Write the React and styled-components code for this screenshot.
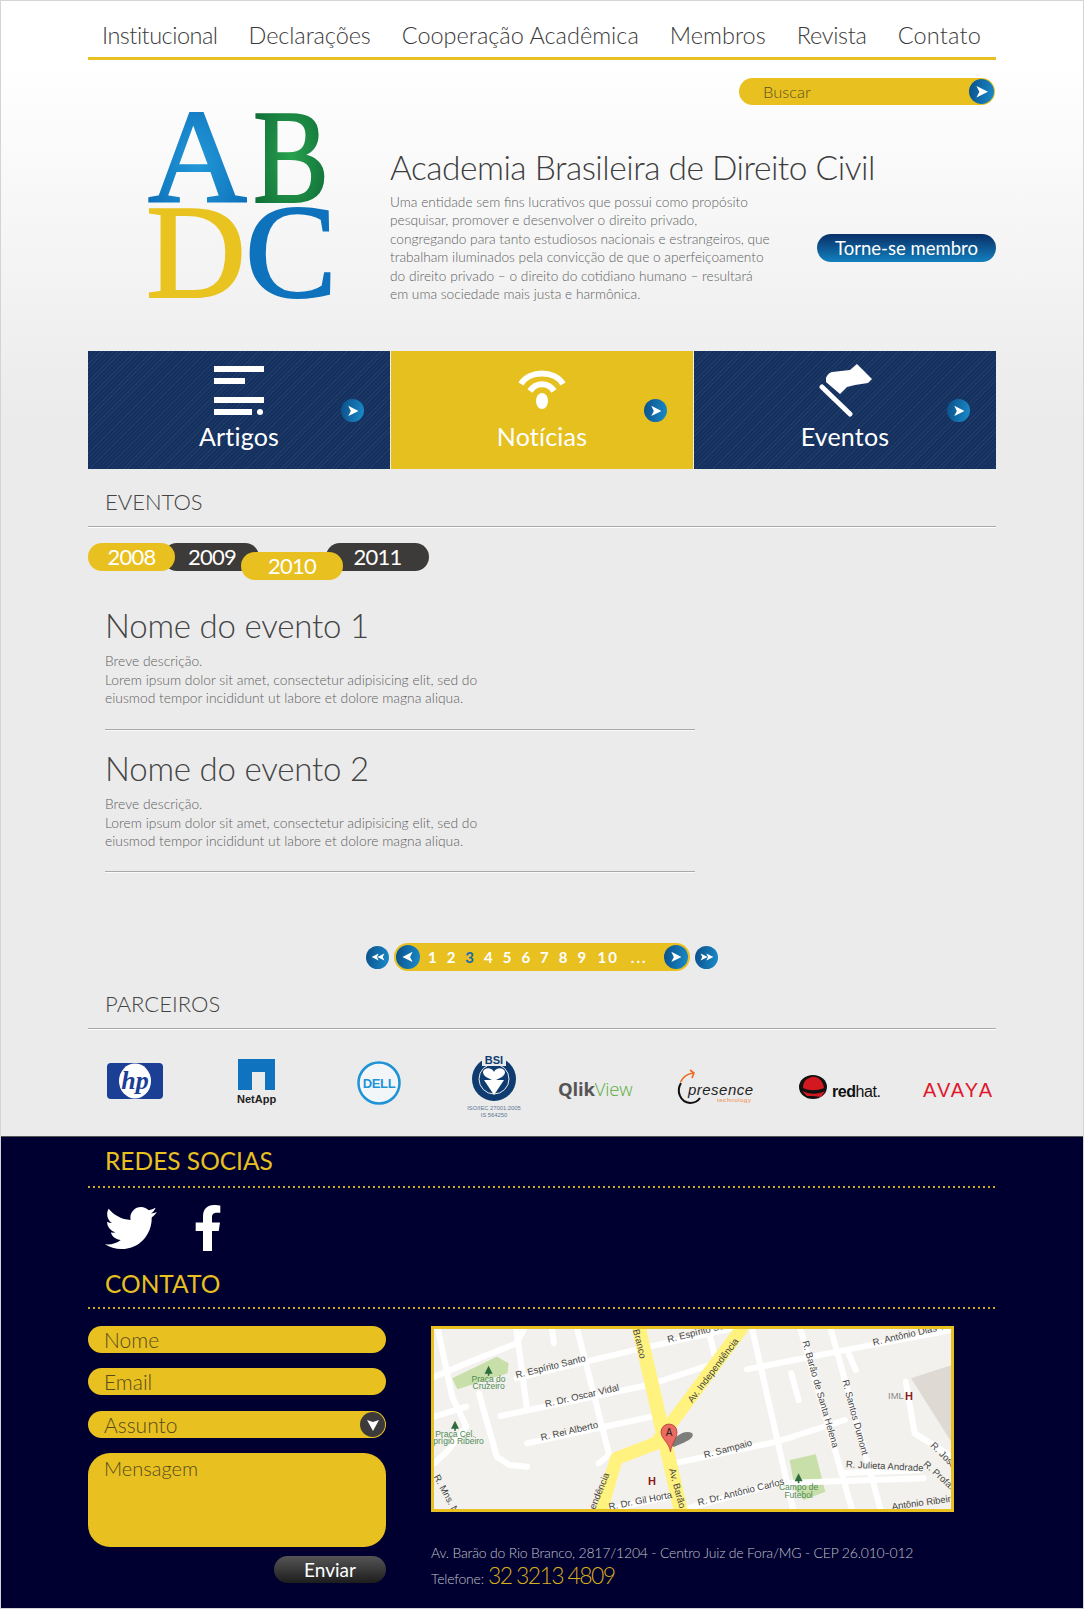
import React from 'react';
import styled, { createGlobalStyle } from 'styled-components';
import { FaTwitter, FaFacebookF } from 'react-icons/fa';

const GOLD = '#e8c020';
const FONT = 'Lato, "Open Sans", sans-serif';

const Global = createGlobalStyle`
  html, body { margin: 0; padding: 0; background: #ebebeb; }
  body { font-family: ${FONT}; font-weight: 300; }
  * { box-sizing: border-box; }
`;

const Page = styled.div`
  width: 1084px;
  height: 1609px;
  display: flex;
  flex-direction: column;
  border: 1px solid #d4d4d4;
  background: linear-gradient(#fff 0, #fff 60px, #ebebeb 420px, #ebebeb 100%);
  overflow: hidden;
`;
const Main = styled.main`
  flex: 0 0 1135px;
  padding: 0 87px;
`;
const Nav = styled.nav`
  height: 59px;
  border-bottom: 3px solid ${GOLD};
  display: flex;
  justify-content: space-between;
  align-items: center;
  padding: 12px 15px 0 14px;
`;
const NavLink = styled.a`
  font-size: 23.5px;
  color: #3b3b3b;
  letter-spacing: ${p => p.$ls || 0}px;
`;
const SearchRow = styled.div`
  display: flex;
  justify-content: flex-end;
  padding: 18px 1px 0 0;
`;
const Pill = styled.div`
  width: 256px;
  height: 27px;
  border-radius: 14px;
  background: ${GOLD};
  display: flex;
  align-items: center;
  justify-content: space-between;
  font-size: 16.5px;
  color: #5c5020;
  padding: 0 1px 0 24px;
`;
const Round = styled.span`
  flex: none;
  width: ${p => p.$s || 23}px;
  height: ${p => p.$s || 23}px;
  border-radius: 50%;
  background: ${p => p.$dark ? '#3c3a3a' : 'linear-gradient(100deg, #0a4f88, #1a8ccb)'};
  display: inline-flex;
  align-items: center;
  justify-content: center;
`;
const Hero = styled.section`
  display: grid;
  grid-template-columns: 302px 395px 1fr;
  height: 246px;
`;
const LogoSvg = styled.svg`
  display: block;
  margin-left: 58px;
  overflow: visible;
`;
const HeroText = styled.div`
  padding-top: 40px;
`;
const Title = styled.h1`
  margin: 0;
  font-size: 33.5px;
  line-height: 44px;
  font-weight: 300;
  color: #3d3d3d;
  white-space: nowrap;
  letter-spacing: -0.5px;
`;
const Para = styled.p`
  margin: 4px 0 0;
  font-size: 13.7px;
  line-height: 18.4px;
  color: #5e5e5e;
  white-space: nowrap;
`;
const Cta = styled.a`
  margin-top: 129px;
  justify-self: end;
  width: 179px;
  height: 28px;
  border-radius: 14px;
  background: linear-gradient(#0a2f66, #1280bf);
  color: #fff;
  font-size: 18.5px;
  font-weight: 400;
  display: flex;
  align-items: center;
  justify-content: center;
`;
const Tiles = styled.div`
  display: grid;
  grid-template-columns: 302px 302px 302px;
  column-gap: 1px;
  height: 118px;
`;
const Tile = styled.a`
  position: relative;
  display: flex;
  flex-direction: column;
  align-items: center;
  padding-top: 12px;
  color: #fff;
  font-size: 25px;
  letter-spacing: 0.2px;
  font-weight: 400;
  background-color: ${p => p.$active ? '#e6c01f' : '#14305f'};
  background-image: ${p => p.$active ? 'none' : 'repeating-linear-gradient(135deg, rgba(255,255,255,.05) 0 1px, transparent 1px 3px)'};
`;
const TileIcon = styled.svg`
  display: block;
  height: 54px;
  width: 70px;
  margin-bottom: 4px;
`;
const TileArrow = styled.span`
  position: absolute;
  right: 26px;
  top: 48px;
  display: flex;
`;
const SectionHead = styled.h2`
  margin: 0;
  height: 58px;
  padding: 0 0 0 17px;
  font-size: 22px;
  font-weight: 300;
  line-height: 66px;
  color: #444;
  border-bottom: 1px solid #a8a8a8;
  box-shadow: 0 1px 0 #fff;
`;
const Years = styled.div`
  display: flex;
  align-items: flex-start;
  height: 38px;
  margin-top: 16px;
`;
const Year = styled.span`
  position: relative;
  z-index: ${p => p.$z};
  width: ${p => p.$w}px;
  height: 28px;
  margin-left: ${p => p.$ml || 0}px;
  margin-top: ${p => p.$mt || 0}px;
  border-radius: 14px;
  background: ${p => p.$on ? GOLD : '#3d3a3a'};
  color: #fff;
  font-size: 22px;
  font-weight: 400;
  letter-spacing: -0.8px;
  line-height: 28px;
  text-align: center;
  padding-left: ${p => p.$pl || 0}px;
`;
const EventItem = styled.article`
  width: 590px;
  margin-left: 17px;
  height: ${p => p.$h}px;
  border-bottom: 1px solid #a8a8a8;
  color: #5e5e5e;
  box-shadow: 0 1px 0 #fafafa;
`;
const EventTitle = styled.h3`
  margin: 0;
  padding-top: ${p => p.$pt}px;
  font-size: 33px;
  letter-spacing: -0.2px;
  line-height: 42px;
  font-weight: 300;
  color: #444;
`;
const EventText = styled.p`
  margin: 6px 0 0;
  font-size: 13.85px;
  line-height: 18.5px;
  white-space: nowrap;
`;
const Pager = styled.div`
  display: flex;
  justify-content: center;
  align-items: center;
  gap: 5px;
  margin-top: 71px;
  height: 28px;
`;
const PagerBar = styled.div`
  width: 296px;
  height: 28px;
  border-radius: 14px;
  background: ${GOLD};
  display: flex;
  align-items: center;
  padding: 0 2px;
`;
const PagerNums = styled.div`
  flex: 1;
  display: flex;
  align-items: center;
  padding-left: 3px;
`;
const Num = styled.span`
  width: ${p => p.$w || 18.7}px;
  margin-left: ${p => p.$ml || 0}px;
  text-align: center;
  font-size: 15px;
  font-weight: 700;
  color: ${p => p.$on ? '#146bb0' : '#fff'};
  letter-spacing: ${p => p.$ls || 0}px;
`;
const Logos = styled.div`
  height: 106px;
  display: flex;
  padding: 22px 0 0 19px;
  align-items: flex-start;
`;
const LogoBox = styled.svg`
  display: block;
  flex: none;
  overflow: visible;
`;
const Footer = styled.footer`
  flex: 1;
  background: #000030;
  border-top: 1px solid #555;
  padding: 0 87px;
`;
const FootHead = styled.h2`
  margin: 0;
  padding-left: 17px;
  height: ${p => p.$h};
  line-height: ${p => p.$lh};
  font-size: 24.5px;
  font-weight: 400;
  color: ${GOLD};
  background: repeating-linear-gradient(90deg, #c9a82a 0 2px, transparent 2px 5px) bottom / 100% 2px no-repeat;
`;
const Social = styled.div`
  display: flex;
  align-items: center;
  height: 88px;
  padding: 0 0 8px 17px;
  color: #fff;
  gap: 28px;
`;
const FootGrid = styled.div`
  display: grid;
  grid-template-columns: 298px 1fr;
  column-gap: 45px;
  padding-top: 17px;
`;
const Form = styled.form`
  display: flex;
  flex-direction: column;
  gap: 15px;
`;
const Field = styled.input`
  display: block;
  width: 100%;
  height: 27px;
  border: 0;
  outline: 0;
  border-radius: 14px;
  background: ${GOLD};
  font: 300 21px ${FONT};
  padding: 0 16px;
  &::placeholder { color: #574b1d; opacity: 1; }
`;
const SelectWrap = styled.div`
  position: relative;
  margin-top: 1px;
`;
const SelectBtn = styled.span`
  position: absolute;
  right: 1px;
  top: 1px;
  display: flex;
`;
const Area = styled.textarea`
  display: block;
  width: 100%;
  height: 94px;
  border: 0;
  outline: 0;
  resize: none;
  border-radius: 22px;
  background: ${GOLD};
  font: 300 20px ${FONT};
  padding: 3px 16px;
  &::placeholder { color: #574b1d; opacity: 1; }
`;
const SendRow = styled.div`
  display: flex;
  justify-content: flex-end;
  margin-top: -6px;
`;
const Send = styled.button`
  width: 112px;
  height: 27px;
  border: 0;
  border-radius: 14px;
  background: linear-gradient(#555, #1d1d1d);
  color: #fff;
  font: 400 19px ${FONT};
  padding: 0;
`;
const MapFrame = styled.div`
  width: 523px;
  height: 186px;
  border: 3px solid ${GOLD};
  background: #f2f0ec;
  overflow: hidden;
`;
const MapSvg = styled.svg`
  display: block;
`;
const Address = styled.p`
  margin: 29px 0 0;
  font-size: 14px;
  letter-spacing: -0.2px;
  line-height: 23px;
  color: #c0c0c8;
  white-space: nowrap;
`;
const Phone = styled.span`
  font-size: 23px;
  letter-spacing: -1.6px;
  color: #d7ae1e;
  margin-left: 4px;
`;

const Arrow = ({ dir = 1, dbl, s = 8 }) => (
  <svg width={dbl ? s * 2 : s * 1.7} height={s * 1.7} viewBox={dbl ? '-11 -7 22 14' : '-7 -7 14 14'} aria-hidden>
    <g fill="#fff" transform={`scale(${dir},1)`}>
      {dbl ? (
        <>
          <path d="M-10 -5.5 L1 0 L-10 5.5 L-7.5 0Z" />
          <path d="M-1 -5.5 L10 0 L-1 5.5 L1.5 0Z" />
        </>
      ) : <path d="M-5.5 -6 L6.5 0 L-5.5 6 L-2.5 0Z" />}
    </g>
  </svg>
);

const AbdcLogo = () => (
  <LogoSvg width="190" height="200" viewBox="148 105 190 200" aria-label="ABDC">
    <defs>
      <radialGradient id="ga" cx="50%" cy="55%" r="60%"><stop offset="0" stopColor="#2299d8" /><stop offset="1" stopColor="#0c6db8" /></radialGradient>
      <radialGradient id="gb" cx="50%" cy="50%" r="60%"><stop offset="0" stopColor="#28a24e" /><stop offset="1" stopColor="#0e6a36" /></radialGradient>
    </defs>
    <g fontFamily='"Liberation Serif", serif' fontSize="134" strokeWidth="2">
      <text x="150" y="201" fill="url(#ga)" stroke="url(#ga)" textLength="99" lengthAdjust="spacingAndGlyphs">A</text>
      <text x="255" y="202" fill="url(#gb)" stroke="url(#gb)" textLength="76" lengthAdjust="spacingAndGlyphs">B</text>
      <text x="148" y="297" fill="#e9c420" stroke="#e9c420" textLength="100" lengthAdjust="spacingAndGlyphs">D</text>
      <text x="247" y="297" fill="#0e72bd" stroke="#0e72bd" textLength="92" lengthAdjust="spacingAndGlyphs">C</text>
    </g>
  </LogoSvg>
);

const ListIcon = () => (
  <TileIcon viewBox="0 0 70 54" fill="#fff" aria-hidden>
    <rect x="10" y="3" width="50" height="6" />
    <rect x="10" y="15" width="31" height="6" />
    <rect x="10" y="34" width="50" height="6" />
    <rect x="10" y="46" width="38" height="6" />
    <circle cx="56" cy="49" r="3" />
  </TileIcon>
);
const WifiIcon = () => (
  <TileIcon viewBox="0 0 70 54" aria-hidden>
    <g fill="none" stroke="#fff" strokeWidth="6">
      <path d="M14 21 C22 7 48 7 56 21" />
      <path d="M23 28 C29 19 41 19 47 28" />
    </g>
    <ellipse cx="35" cy="38" rx="6" ry="8" fill="#fff" />
  </TileIcon>
);
const FlagIcon = () => (
  <TileIcon viewBox="0 0 70 54" aria-hidden>
    <path d="M16 15 Q18 10 22 9 L40 7 L47 1 L62 16 L58 20 L45 22 L37 24 L30 31 L16 19Z" fill="#fff" strokeLinejoin="round" />
    <path d="M12 24 L40 51" stroke="#fff" strokeWidth="5" strokeLinecap="round" />
  </TileIcon>
);

const EVENT_LINES = ['Breve descrição.', 'Lorem ipsum dolor sit amet, consectetur adipisicing elit, sed do', 'eiusmod tempor incididunt ut labore et dolore magna aliqua.'];

const SANS = '"Liberation Sans", sans-serif';

const PARTNERS = [
  { w: 131, h: 70, node: (
    <g>
      <rect x="0" y="12" width="56" height="36" rx="4" fill="#1c3f96" />
      <ellipse cx="28" cy="30" rx="16" ry="17.5" fill="#fff" />
      <text x="28" y="38" textAnchor="middle" fontFamily='"Liberation Serif", serif' fontStyle="italic" fontWeight="700" fontSize="26" fill="#1c3f96">hp</text>
    </g>) },
  { w: 118, h: 70, node: (
    <g>
      <path d="M0 8 H37 V39 H27 V21 H14 V39 H0Z" fill="#0f73c0" />
      <text x="-1" y="52" fontFamily={SANS} fontWeight="700" fontSize="11" fill="#222">NetApp</text>
    </g>) },
  { w: 117, h: 70, node: (
    <g>
      <circle cx="23" cy="32" r="20.5" fill="#f3f6f9" stroke="#1e94d6" strokeWidth="2.5" />
      <text x="23" y="37" textAnchor="middle" fontFamily={SANS} fontWeight="700" fontSize="13" letterSpacing="-.4" fill="#1e94d6">DELL</text>
    </g>) },
  { w: 85, h: 80, node: (
    <g>
      <circle cx="21" cy="28" r="22" fill="#0f3c70" />
      <circle cx="21" cy="28" r="15" fill="none" stroke="#ebebeb" strokeWidth="1" />
      <path d="M21 21 C19 16 11 16 10 21 C10 24 12 26 21 30 C30 26 32 24 32 21 C31 16 23 16 21 21Z" fill="#fff" />
      <path d="M11 29 L31 29 L21 44Z" fill="#fff" />
      <rect x="9" y="3" width="24" height="12" fill="#ebebeb" />
      <text x="21" y="13" textAnchor="middle" fontFamily={SANS} fontWeight="700" fontSize="11" fill="#0f3c70">BSI</text>
      <text x="21" y="59" textAnchor="middle" fontFamily={SANS} fontSize="5.8" fill="#5b7795">ISO/IEC 27001:2005</text>
      <text x="21" y="66" textAnchor="middle" fontFamily={SANS} fontSize="5.8" fill="#5b7795">IS 564250</text>
    </g>) },
  { w: 119, h: 70, node: (
    <text x="0" y="45" fontFamily='"Open Sans", sans-serif' fontSize="18.5" letterSpacing="-.2">
      <tspan fontWeight="700" fill="#555">Qlik</tspan><tspan fill="#5cab3c">View</tspan>
    </text>) },
  { w: 122, h: 70, node: (
    <g>
      <path d="M4 32 C-1 40 3 51 13 52 C18 52 21 50 23 47" fill="none" stroke="#111" strokeWidth="2" />
      <path d="M3.5 31 C6 26 10 23 16 22 M13 19 L17 22 L15 27" fill="none" stroke="#ee6a1e" strokeWidth="1.6" />
      <text x="11" y="44" fontFamily={SANS} fontStyle="italic" fontSize="15" textLength="65" fill="#222">presence</text>
      <text x="40" y="51" fontFamily={SANS} fontSize="6" textLength="34" fill="#ee8a3c">technology</text>
    </g>) },
  { w: 124, h: 70, node: (
    <g>
      <ellipse cx="14" cy="36" rx="14" ry="12" fill="#111" />
      <path d="M4 37 C4 30 8 27 13 26 C19 25 24 30 25 37 C18 40 10 40 4 37Z" fill="#d2191f" />
      <path d="M3 40 C10 43 18 44 26 40 L22 46 L14 45 L8 45Z" fill="#d2191f" />
      <text x="33" y="46" fontFamily={SANS} fontSize="16" textLength="49" fill="#111"><tspan fontWeight="700">red</tspan>hat.</text>
    </g>) },
  { w: 70, h: 70, node: (
    <text x="0" y="46" fontFamily={SANS} fontSize="20" textLength="69" fill="#e0182d">AVAYA</text>) },
];

const mp = (x, y) => [x / 2.8 - 14, y / 3 - 19];
const line = pts => pts.map(([x, y]) => mp(x, y).join(',')).join(' ');

const WHITE_ROADS = [
  [[30, 205], [130, 160], [270, 100], [290, 60]],
  [[270, 205], [620, 115], [900, 50]],
  [[225, 318], [640, 225], [840, 155]],
  [[300, 400], [670, 315]],
  [[720, 458], [1000, 395], [1190, 330]],
  [[750, 595], [1000, 520], [1410, 505]],
  [[915, 178], [1240, 110], [1490, 60]],
  [[1065, 57], [1210, 600]],
  [[1150, 57], [1290, 600]],
  [[930, 57], [1045, 600]],
  [[440, 57], [530, 435], [500, 460]],
  [[50, 57], [90, 260], [130, 350], [80, 420], [40, 460]],
  [[40, 320], [130, 290]],
  [[165, 250], [215, 440], [250, 465], [300, 470]],
  [[1360, 215], [1385, 370], [1490, 440]],
  [[1040, 190], [1060, 270]],
  [[1180, 490], [1400, 480]],
  [[270, 60], [300, 300]],
  [[370, 60], [375, 100]],
  [[810, 70], [830, 160]],
  [[520, 600], [700, 560]],
  [[1200, 130], [1220, 180]],
];

const LABELS = [
  ['R. Espírito Santo', 270, 205, -14],
  ['R. Espírito San', 695, 98, -14],
  ['R. Dr. Oscar Vidal', 352, 292, -13],
  ['R. Rei Alberto', 340, 392, -13],
  ['Av. Independência', 762, 280, -53],
  ['Branco', 596, 60, 76],
  ['R. Sampaio', 797, 445, -15],
  ['R. Antônio Dias Tosta', 1270, 107, -13],
  ['R. Barão de Santa Helena', 1070, 95, 74],
  ['R. Santos Dumont', 1182, 212, 75],
  ['R. Julieta Andrade', 1192, 472, 3],
  ['R. Dr. Antônio Carlos', 780, 587, -14],
  ['R. Dr. Gil Horta', 530, 600, -11],
  ['Av. Barão', 697, 478, 75],
  ['endência', 490, 600, -68],
  ['Antônio Ribeiro', 1322, 600, -8],
  ['R. José', 1428, 408, 45],
  ['R. Profa.', 1408, 465, 42],
  ['R. Mns. Ne', 38, 500, 62],
];

const GREEN_LABELS = [
  ['Praça do', 192, 215], ['Cruzeiro', 192, 238], ['Praça Cel.', 98, 380], ['Aprígio Ribeiro', 100, 403],
  ['Campo de', 1060, 540], ['Futebol', 1060, 563],
];

const MapDrawing = () => (
  <MapSvg width="517" height="180" viewBox="0 0 517 180" role="img" aria-label="Mapa">
    <rect width="517" height="180" fill="#f3f1ed" />
    <polygon points={line([[1375, 205], [1490, 165], [1490, 400]])} fill="#dedad3" />
    <polygon points={line([[90, 205], [215, 140], [248, 160], [245, 190], [105, 238]])} fill="#c9dfa9" />
    <polygon points={line([[1035, 450], [1108, 433], [1135, 545], [1075, 570], [1050, 540]])} fill="#c9dfa9" />
    <g fill="none" stroke="#fff" strokeWidth="6" strokeLinejoin="round" strokeLinecap="round">
      {WHITE_ROADS.map((r, i) => <polyline key={i} points={line(r)} />)}
    </g>
    <g fill="none" stroke="#fff27f" strokeLinejoin="round">
      <polyline strokeWidth="14" points={line([[612, 50], [732, 610]])} />
      <polyline strokeWidth="13" points={line([[905, 50], [700, 345], [660, 400], [550, 445], [505, 610]])} />
    </g>
    <g fontFamily={SANS} fontSize="9.5">
      {LABELS.map(([t, x, y, r]) => {
        const [px, py] = mp(x, y);
        return <text key={t} x={px} y={py} fill="#444" transform={`rotate(${r} ${px} ${py})`}>{t}</text>;
      })}
      {GREEN_LABELS.map(([t, x, y]) => {
        const [px, py] = mp(x, y);
        return <text key={t} x={px} y={py} fill="#4f8b57" fontSize="8.5" textAnchor="middle">{t}</text>;
      })}
      <text x="454" y="70" fill="#8a8a8a">IML</text>
      <text x="471" y="71" fill="#8c1a1a" fontWeight="700" fontSize="11">H</text>
      <text x="214" y="156" fill="#8c1a1a" fontWeight="700" fontSize="11">H</text>
    </g>
    {[[192, 182], [98, 347], [1060, 505]].map(([x, y]) => {
      const [px, py] = mp(x, y);
      return <path key={x} d={`M${px} ${py - 5} l4 8 h-8Z M${px - .8} ${py + 3} h1.6 v2 h-1.6Z`} fill="#2e6b3d" />;
    })}
    <path d="M240 118 C248 114 262 110 258 104 C250 100 240 108 236 116Z" fill="#555" opacity=".75" />
    <path d="M236.5 123 C235 113 227 110 227 103 A8 8 0 0 1 243 103 C243 110 238 113 236.5 123Z" fill="#ed6a60" stroke="#a8322c" strokeWidth=".7" />
    <text x="235" y="107" textAnchor="middle" fontFamily={SANS} fontSize="10" fill="#222">A</text>
  </MapSvg>
);

const App = () => (
  <>
    <Global />
    <Page>
      <Main>
        <Nav>
          <NavLink $ls={-0.5}>Institucional</NavLink>
          <NavLink $ls={-0.1}>Declarações</NavLink>
          <NavLink>Cooperação Acadêmica</NavLink>
          <NavLink>Membros</NavLink>
          <NavLink $ls={-0.3}>Revista</NavLink>
          <NavLink $ls={0.2}>Contato</NavLink>
        </Nav>
        <SearchRow>
          <Pill><span>Buscar</span><Round $s={25}><Arrow s={8} /></Round></Pill>
        </SearchRow>
        <Hero>
          <AbdcLogo />
          <HeroText>
            <Title>Academia Brasileira de Direito Civil</Title>
            <Para>
              Uma entidade sem fins lucrativos que possui como propósito<br />
              pesquisar, promover e desenvolver o direito privado,<br />
              congregando para tanto estudiosos nacionais e estrangeiros, que<br />
              trabalham iluminados pela convicção de que o aperfeiçoamento<br />
              do direito privado – o direito do cotidiano humano – resultará<br />
              em uma sociedade mais justa e harmônica.
            </Para>
          </HeroText>
          <Cta>Torne-se membro</Cta>
        </Hero>
        <Tiles>
          <Tile><ListIcon />Artigos<TileArrow><Round><Arrow s={7} /></Round></TileArrow></Tile>
          <Tile $active><WifiIcon />Notícias<TileArrow><Round><Arrow s={7} /></Round></TileArrow></Tile>
          <Tile><FlagIcon />Eventos<TileArrow><Round><Arrow s={7} /></Round></TileArrow></Tile>
        </Tiles>
        <SectionHead>EVENTOS</SectionHead>
        <Years>
          <Year $w={87} $z={4} $on>2008</Year>
          <Year $w={96} $z={1} $ml={-12} $pl={2}>2009</Year>
          <Year $w={102} $z={3} $ml={-18} $mt={9} $on>2010</Year>
          <Year $w={103} $z={2} $ml={-17}>2011</Year>
        </Years>
        <EventItem $h={149}>
          <EventTitle $pt={23}>Nome do evento 1</EventTitle>
          <EventText>{EVENT_LINES[0]}<br />{EVENT_LINES[1]}<br />{EVENT_LINES[2]}</EventText>
        </EventItem>
        <EventItem $h={142}>
          <EventTitle $pt={17}>Nome do evento 2</EventTitle>
          <EventText>{EVENT_LINES[0]}<br />{EVENT_LINES[1]}<br />{EVENT_LINES[2]}</EventText>
        </EventItem>
        <Pager>
          <Round><Arrow dir={-1} dbl s={7} /></Round>
          <PagerBar>
            <Round $s={24}><Arrow dir={-1} s={7} /></Round>
            <PagerNums>
              {[1, 2].map(n => <Num key={n}>{n}</Num>)}
              <Num $on>3</Num>
              {[4, 5, 6, 7, 8, 9].map(n => <Num key={n}>{n}</Num>)}
              <Num $w={24} $ml={5} $ls={2}>10</Num>
              <Num $w={26} $ml={6} $ls={2}>...</Num>
            </PagerNums>
            <Round $s={24}><Arrow s={7} /></Round>
          </PagerBar>
          <Round><Arrow dbl s={7} /></Round>
        </Pager>
        <SectionHead>PARCEIROS</SectionHead>
        <Logos>
          {PARTNERS.map((p, i) => <LogoBox key={i} width={p.w} height={p.h} viewBox={`0 0 ${p.w} ${p.h}`}>{p.node}</LogoBox>)}
        </Logos>
      </Main>
      <Footer>
        <FootHead $h="51px" $lh="48px">REDES SOCIAS</FootHead>
        <Social>
          <FaTwitter size={52} />
          <FaFacebookF size={46} />
        </Social>
        <FootHead $h="33px" $lh="16px">CONTATO</FootHead>
        <FootGrid>
          <Form>
            <Field placeholder="Nome" />
            <Field placeholder="Email" />
            <SelectWrap>
              <Field placeholder="Assunto" />
              <SelectBtn><Round $s={25} $dark><svg width="14" height="14" viewBox="-7 -7 14 14"><path d="M-6 -5 L0 6 L6 -5 L0 -3Z" fill="#fff" /></svg></Round></SelectBtn>
            </SelectWrap>
            <Area placeholder="Mensagem" />
            <SendRow><Send type="button">Enviar</Send></SendRow>
          </Form>
          <div>
            <MapFrame><MapDrawing /></MapFrame>
            <Address>
              Av. Barão do Rio Branco, 2817/1204 - Centro Juiz de Fora/MG - CEP 26.010-012<br />
              Telefone:<Phone>32 3213 4809</Phone>
            </Address>
          </div>
        </FootGrid>
      </Footer>
    </Page>
  </>
);

export default App;
